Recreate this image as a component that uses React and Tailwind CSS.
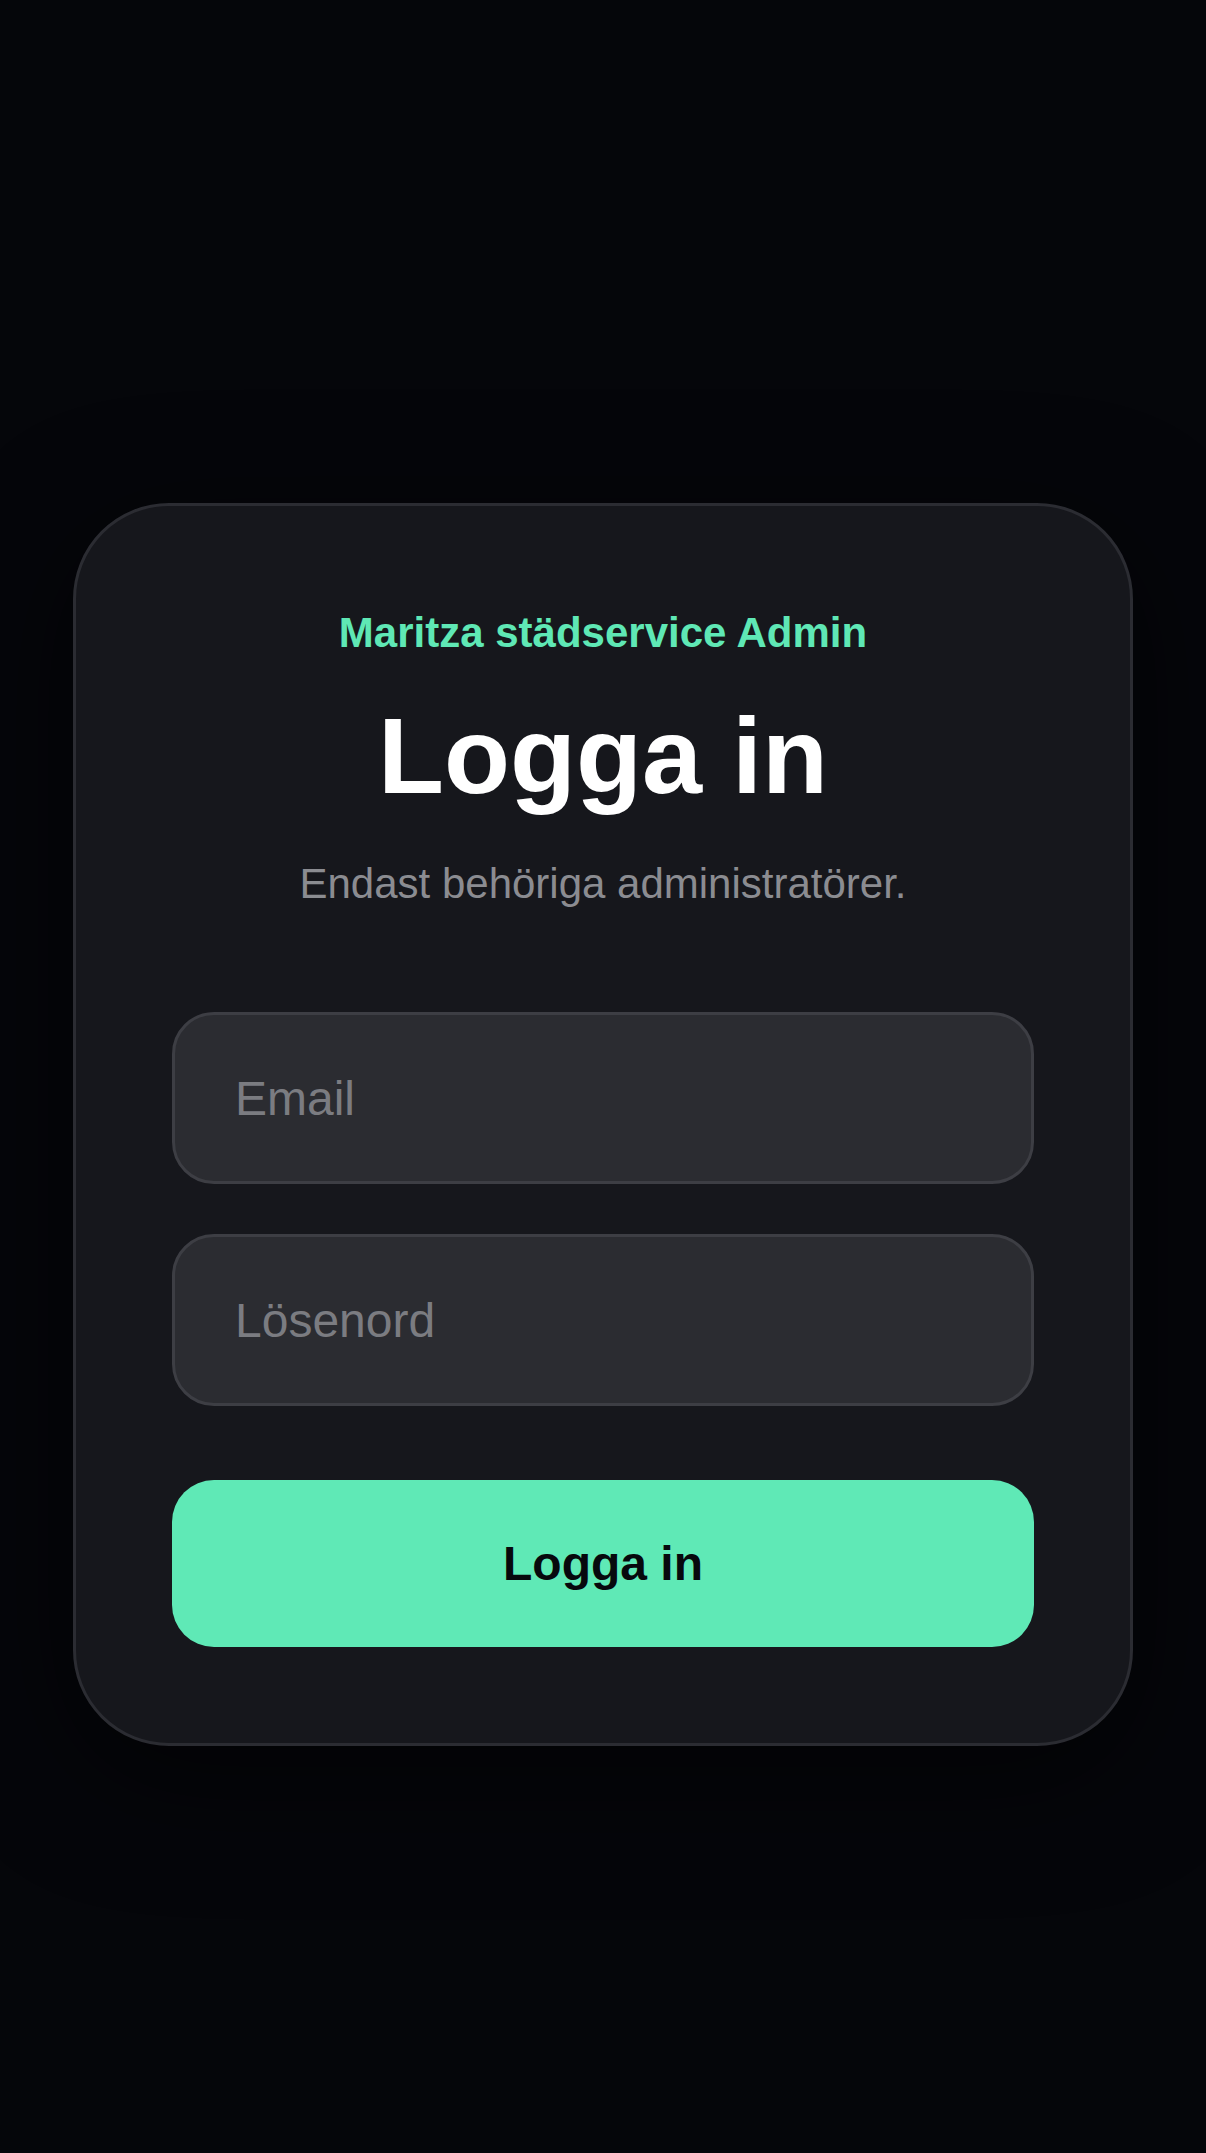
import React, { useState } from 'react';

const App = () => {
  const [formData, setFormData] = useState({ email: '', password: '' });

  const handleSubmit = (e) => {
    e.preventDefault();
  };

  return (
    <div className="min-h-screen bg-[#05060a] flex items-center justify-center pt-[96px] font-['Liberation_Sans',Arial,sans-serif]">
      <div className="w-[1060px] bg-[#16171c] border-[3px] border-[#2b2c32] rounded-[96px] px-[96px] pt-[97px] pb-[96px] shadow-[0_30px_120px_rgba(0,0,0,0.6)]">
        <div className="flex flex-col items-center text-center">
          <p className="text-[42px] leading-[60px] font-bold text-[#5fe8b5]">
            Maritza städservice Admin
          </p>
          <h1 className="mt-[33px] text-[108px] leading-[120px] font-bold text-white">
            Logga in
          </h1>
          <p className="mt-[38px] text-[42px] leading-[60px] text-[#8b8c91]">
            Endast behöriga administratörer.
          </p>
        </div>

        <form onSubmit={handleSubmit} className="mt-[98px] flex flex-col">
          <input
            type="email"
            value={formData.email}
            onChange={(e) => setFormData({ ...formData, email: e.target.value })}
            placeholder="Email"
            className="h-[172px] w-full rounded-[42px] border-[3px] border-[#3d3e44] bg-[#2b2c31] px-[60px] text-[48px] text-white placeholder:text-[#7b7c81] outline-none"
          />
          <input
            type="password"
            value={formData.password}
            onChange={(e) => setFormData({ ...formData, password: e.target.value })}
            placeholder="Lösenord"
            className="mt-[50px] h-[172px] w-full rounded-[42px] border-[3px] border-[#3d3e44] bg-[#2b2c31] px-[60px] text-[48px] text-white placeholder:text-[#7b7c81] outline-none"
          />
          <button
            type="submit"
            className="mt-[74px] h-[167px] w-full rounded-[42px] bg-[#5fe9b6] text-[48px] font-bold text-[#07090d]"
          >
            Logga in
          </button>
        </form>
      </div>
    </div>
  );
};

export default App;
